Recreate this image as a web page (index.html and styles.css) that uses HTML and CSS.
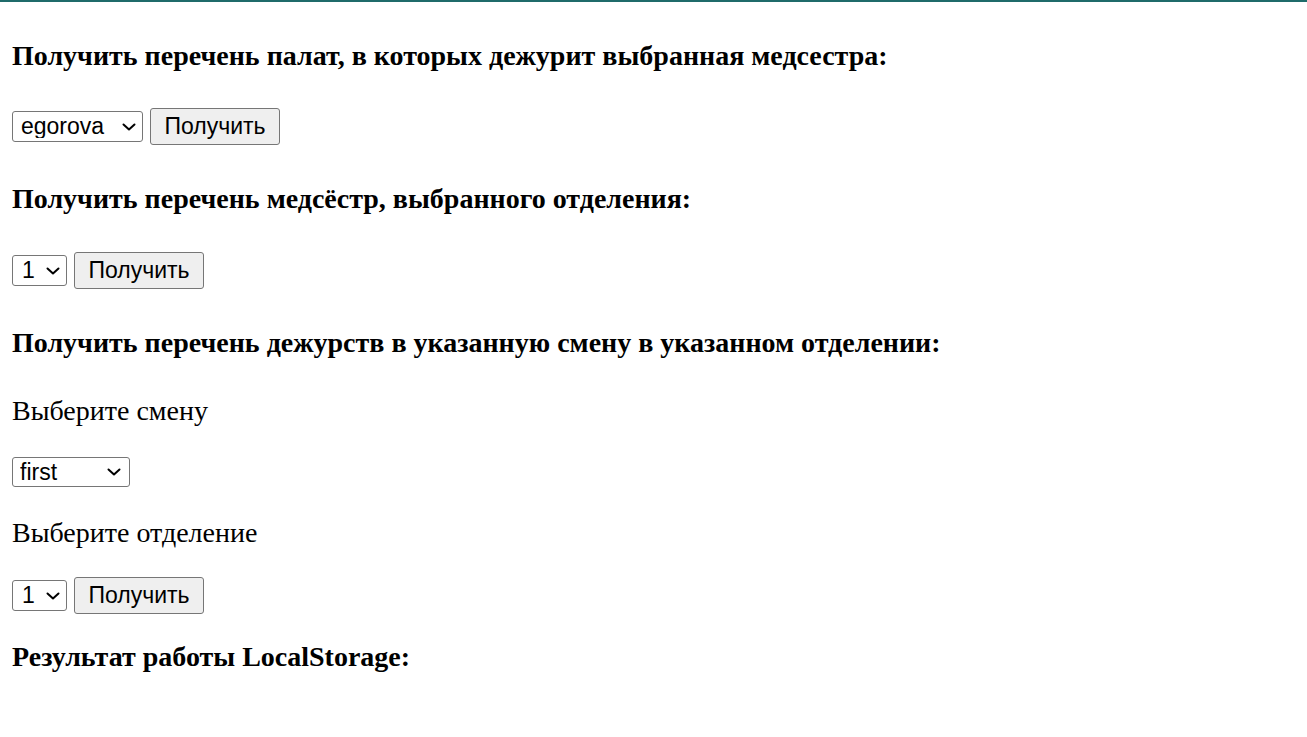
FILE: index.html
```html
<!DOCTYPE html>
<html lang="ru">
<head>
<meta charset="utf-8">
<title>Медсёстры</title>
<link rel="stylesheet" href="styles.css">
</head>
<body>
<div class="topbar"></div>
<main class="page">
  <h3 class="title t1">Получить перечень палат, в которых дежурит выбранная медсестра:</h3>
  <div class="row r1">
    <span class="selwrap sw-nurse">
      <select class="sel"><option>egorova</option></select>
      <svg class="chev" viewBox="0 0 14 8" aria-hidden="true"><path d="M1.5 1.5 L7 6.5 L12.5 1.5"/></svg>
    </span>
    <button class="btn">Получить</button>
  </div>
  <h3 class="title t2">Получить перечень медсёстр, выбранного отделения:</h3>
  <div class="row r2">
    <span class="selwrap sw-num">
      <select class="sel"><option>1</option></select>
      <svg class="chev" viewBox="0 0 14 8" aria-hidden="true"><path d="M1.5 1.5 L7 6.5 L12.5 1.5"/></svg>
    </span>
    <button class="btn">Получить</button>
  </div>
  <h3 class="title t3">Получить перечень дежурств в указанную смену в указанном отделении:</h3>
  <p class="label l1">Выберите смену</p>
  <div class="row r3">
    <span class="selwrap sw-shift">
      <select class="sel"><option>first</option></select>
      <svg class="chev" viewBox="0 0 14 8" aria-hidden="true"><path d="M1.5 1.5 L7 6.5 L12.5 1.5"/></svg>
    </span>
  </div>
  <p class="label l2">Выберите отделение</p>
  <div class="row r4">
    <span class="selwrap sw-num">
      <select class="sel"><option>1</option></select>
      <svg class="chev" viewBox="0 0 14 8" aria-hidden="true"><path d="M1.5 1.5 L7 6.5 L12.5 1.5"/></svg>
    </span>
    <button class="btn">Получить</button>
  </div>
  <h3 class="title t4">Результат работы LocalStorage:</h3>
</main>
</body>
</html>
```

FILE: styles.css
```css
html, body {
  margin: 0;
  padding: 0;
  background: #ffffff;
}
body {
  font-family: "Liberation Serif", "Times New Roman", serif;
  color: #000000;
}
.topbar {
  height: 2px;
  background: #1f6b6a;
}
.page {
  display: flex;
  flex-direction: column;
  align-items: flex-start;
  padding: 0 12px;
}
.title {
  margin: 0;
  font-size: 28px;
  line-height: 32px;
  font-weight: bold;
}
.label {
  margin: 0;
  font-size: 28px;
  line-height: 32px;
  font-weight: normal;
}
.t1 { margin-top: 38px; }
.r1 { margin-top: 36px; }
.t2 { margin-top: 38px; }
.r2 { margin-top: 37px; }
.t3 { margin-top: 38px; }
.l1 { margin-top: 36px; }
.r3 { margin-top: 30px; }
.l2 { margin-top: 30px; }
.r4 { margin-top: 28px; }
.t4 { margin-top: 27px; }

.row {
  display: flex;
  align-items: center;
  gap: 7px;
  min-height: 30px;
}
.selwrap {
  position: relative;
  display: inline-flex;
}
.sel {
  appearance: none;
  -webkit-appearance: none;
  font-family: Arial, "Liberation Sans", sans-serif;
  font-size: 23px;
  line-height: 1;
  height: 31px;
  width: 100%;
  border: 1px solid #767676;
  border-radius: 3px;
  background-color: #ffffff;
  color: #000000;
  padding: 0 0 0 8px;
  box-sizing: border-box;
}
.sw-nurse { width: 131px; }
.sw-num { width: 55px; }
.sw-shift { width: 118px; }
.sw-shift .sel { height: 30px; padding-left: 7px; }
.sw-num .sel { padding-left: 9px; }
.chev {
  position: absolute;
  right: 7px;
  top: 50%;
  width: 14px;
  height: 8px;
  margin-top: -4px;
  fill: none;
  stroke: #000000;
  stroke-width: 2;
  stroke-linecap: round;
  stroke-linejoin: round;
  pointer-events: none;
}
.sw-shift .chev {
  right: 9px;
}
.btn {
  font-family: Arial, "Liberation Sans", sans-serif;
  font-size: 23px;
  height: 37px;
  width: 130px;
  padding: 0 10px;
  border: 1px solid #767676;
  border-radius: 3px;
  background: #efefef;
  color: #000000;
  box-sizing: border-box;
}
```
